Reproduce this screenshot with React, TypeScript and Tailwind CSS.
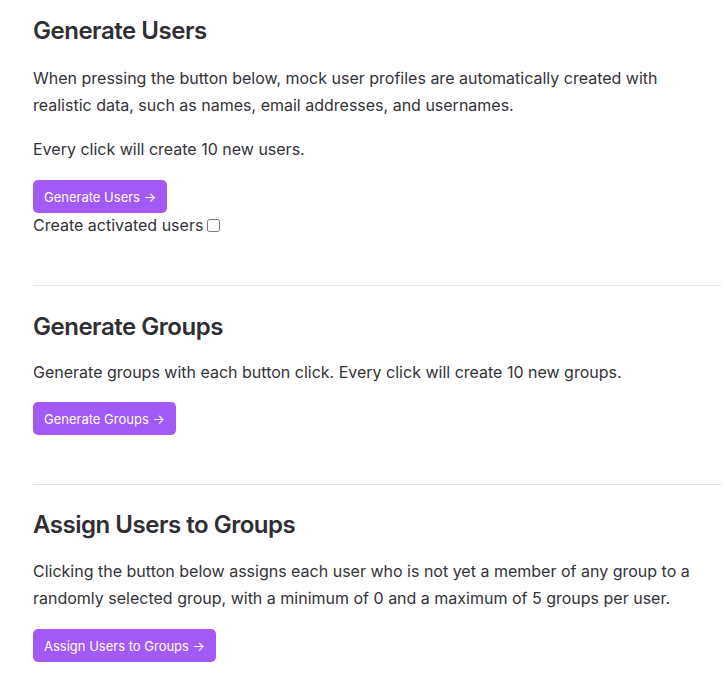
import React from "react";

function Btn({ label }: { label: string }) {
  return (
    <button className="flex h-[33px] items-center rounded-[5px] bg-[#a259f6] px-[11px] text-[13px] leading-5 text-white">
      {label} →
    </button>
  );
}

export default function App() {
  return (
    <div className="min-h-[690px] bg-white pl-[33px] pr-[2px] font-['Inter',sans-serif] text-[#333338]">
      <section className="pt-[15px] pb-[48px]">
        <h2 className="text-[24px] font-semibold leading-8 tracking-[-0.02em] text-[#2e2e33]">Generate Users</h2>
        <p className="mt-[18px] max-w-[660px] text-[16px] leading-[27px]">
          When pressing the button below, mock user profiles are automatically created with realistic data, such as names, email addresses, and usernames.
        </p>
        <p className="mt-[17px] text-[16px] leading-[27px]">Every click will create 10 new users.</p>
        <div className="mt-[17px]">
          <Btn label="Generate Users" />
        </div>
        <label className="flex items-center gap-[4px] text-[16px] leading-6">
          Create activated users
          <input type="checkbox" className="m-0 h-[13px] w-[13px]" />
        </label>
      </section>
      <section className="border-t border-[#e2e2e2] pt-[25px] pb-[49px]">
        <h2 className="text-[24px] font-semibold leading-8 tracking-[-0.02em] text-[#2e2e33]">Generate Groups</h2>
        <p className="mt-[16px] max-w-[660px] text-[16px] leading-[27px]">
          Generate groups with each button click. Every click will create 10 new groups.
        </p>
        <div className="mt-[16px]">
          <Btn label="Generate Groups" />
        </div>
      </section>
      <section className="border-t border-[#e2e2e2] pt-[24px] pb-[28px]">
        <h2 className="text-[24px] font-semibold leading-8 tracking-[-0.02em] text-[#2e2e33]">Assign Users to Groups</h2>
        <p className="mt-[17px] max-w-[660px] text-[16px] leading-[27px]">
          Clicking the button below assigns each user who is not yet a member of any group to a randomly selected group, with a minimum of 0 and a maximum of 5 groups per user.
        </p>
        <div className="mt-[17px]">
          <Btn label="Assign Users to Groups" />
        </div>
      </section>
    </div>
  );
}
